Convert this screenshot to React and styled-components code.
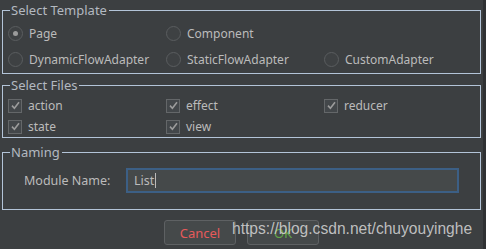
import React from 'react';
import styled, { createGlobalStyle } from 'styled-components';

const GlobalStyle = createGlobalStyle`
  html, body {
    margin: 0;
    padding: 0;
    background: #3c3f41;
  }
  body {
    font-family: 'Noto Sans', 'Liberation Sans', sans-serif;
    color: #bbbbbb;
  }
`;

export default function App() {
  const templates = [
    { label: 'Page', checked: true },
    { label: 'Component' },
    null,
    { label: 'DynamicFlowAdapter' },
    { label: 'StaticFlowAdapter' },
    { label: 'CustomAdapter' },
  ];
  const files = ['action', 'effect', 'reducer', 'state', 'view'];

  return (
    <Window>
      <GlobalStyle />
      <Dialog>
        <Group $top={3} $height={69}>
          <Legend>Select Template</Legend>
          <Grid $rows="26px 26px">
            {templates.map((t, i) =>
              t ? (
                <Option key={i}>
                  <Radio $checked={t.checked} />
                  <span>{t.label}</span>
                </Option>
              ) : (
                <span key={i} />
              )
            )}
          </Grid>
        </Group>

        <Group $top={4} $height={58}>
          <Legend>Select Files</Legend>
          <Grid $rows="21px 21px">
            {files.map((f) => (
              <Option key={f}>
                <Check>
                  <svg width="11" height="11" viewBox="0 0 11 11">
                    <path d="M2 5.6 L4.4 8.2 L9 2.2" fill="none" stroke="#9c9c9c" strokeWidth="1.6" />
                  </svg>
                </Check>
                <span>{f}</span>
              </Option>
            ))}
          </Grid>
        </Group>

        <Group $top={7} $height={63}>
          <Legend>Naming</Legend>
          <NameRow>
            <Label>Module Name:</Label>
            <Input>
              List<Caret />
            </Input>
          </NameRow>
        </Group>

        <Footer>
          <Button $color="#e65a5a">Cancel</Button>
          <Button $color="#62a547">OK</Button>
          <Watermark>https://blog.csdn.net/chuyouyinghe</Watermark>
        </Footer>
      </Dialog>
      <Edge />
    </Window>
  );
}

const Window = styled.div`
  display: flex;
  width: 486px;
  height: 249px;
  overflow: hidden;
`;

const Dialog = styled.div`
  flex: 1;
  padding-left: 2px;
  display: flex;
  flex-direction: column;
`;

const Edge = styled.div`
  width: 3px;
  margin-left: 2px;
  background: #2f3133;
`;

const Group = styled.fieldset`
  margin: ${(p) => p.$top}px 0 0 0;
  padding: 0 0 0 5px;
  border: 1px solid #b3c4d8;
  min-width: 0;
  height: ${(p) => p.$height}px;
  box-sizing: content-box;
`;

const Legend = styled.legend`
  margin-left: 2px;
  padding: 0 2px 0 1px;
  font-size: 13px;
  line-height: 14px;
  color: #b3b9c0;
`;

const Grid = styled.div`
  display: grid;
  grid-template-columns: 158px 158px auto;
  grid-template-rows: ${(p) => p.$rows};
  margin-top: 3px;
`;

const Option = styled.label`
  display: flex;
  align-items: center;
  gap: 6px;
  font-size: 12px;
  color: #bbbbbb;
`;

const Radio = styled.span`
  width: 13px;
  height: 13px;
  border-radius: 50%;
  border: 1px solid #5a5d5f;
  background: #3e4143;
  display: flex;
  align-items: center;
  justify-content: center;
  flex: none;
  &::after {
    content: '';
    width: 5px;
    height: 5px;
    border-radius: 50%;
    background: ${(p) => (p.$checked ? '#9b9b9b' : 'transparent')};
  }
`;

const Check = styled.span`
  width: 12px;
  height: 12px;
  border: 1px solid #646769;
  background: #43474a;
  display: flex;
  align-items: center;
  justify-content: center;
  flex: none;
`;

const NameRow = styled.div`
  display: flex;
  align-items: center;
  margin-top: 9px;
  padding-left: 16px;
`;

const Label = styled.span`
  font-size: 12.5px;
  width: 102px;
`;

const Input = styled.div`
  width: 323px;
  height: 21px;
  border: 2px solid #3c5f85;
  background: #45494a;
  font-size: 12.5px;
  color: #bbbbbb;
  display: flex;
  align-items: center;
  padding-left: 6px;
`;

const Caret = styled.span`
  width: 1px;
  height: 15px;
  background: #bbbbbb;
  margin-left: 1px;
`;

const Footer = styled.div`
  position: relative;
  display: flex;
  gap: 11px;
  margin-top: 10px;
  padding-left: 162px;
`;

const Button = styled.button`
  width: 72px;
  height: 25px;
  border: 1px solid #5e6163;
  border-radius: 3px;
  background: #45494a;
  color: ${(p) => p.$color};
  font-family: 'Noto Sans', sans-serif;
  font-size: 13px;
  padding: 0;
`;

const Watermark = styled.span`
  position: absolute;
  left: 230px;
  top: 0px;
  font-family: 'Liberation Sans', Arial, sans-serif;
  font-size: 15.6px;
  color: rgba(215, 215, 215, 0.85);
  white-space: nowrap;
`;
